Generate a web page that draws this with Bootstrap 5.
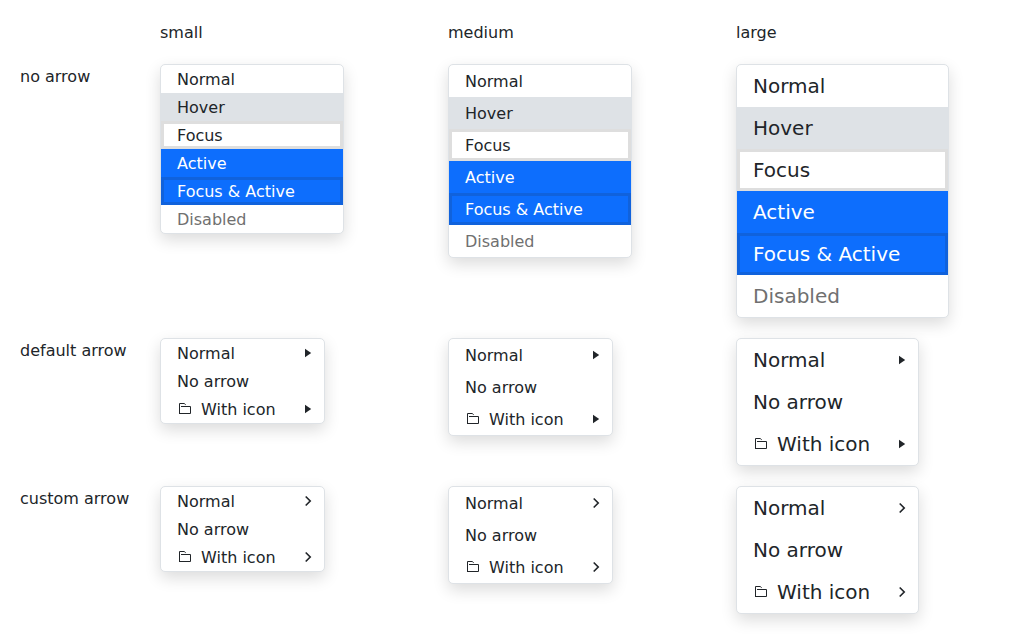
<!DOCTYPE html>
<html lang="en">
<head>
<meta charset="utf-8">
<meta name="viewport" content="width=device-width, initial-scale=1">
<title>Menu items</title>
<link href="https://cdn.jsdelivr.net/npm/bootstrap@5.3.0/dist/css/bootstrap.min.css" rel="stylesheet">
<style>
body { font-family: "DejaVu Sans", sans-serif; color: #212529; }
.demo-grid { grid-template-columns: 120px repeat(3, 1fr); gap: 20px; padding: 20px; }
.demo-label { padding-top: 1px; margin-bottom: -1px; }
.menu { border: 1px solid #dee2e6; border-radius: 5px; box-shadow: 0 6px 16px rgba(0, 0, 0, .14); }
.menu .dropdown-item { padding: 5px 48px 3px 16px; color: #212529; gap: 8px; }
.menu-sm .dropdown-item { padding-top: 3px; padding-bottom: 1px; }
.menu-lg .dropdown-item { padding-top: 6px; padding-bottom: 6px; font-size: 20px; }
.menu .is-hover { background: #dee2e6; }
.menu .is-focus { box-shadow: inset 0 0 0 3px rgba(34, 34, 34, .15); }
.menu .dropdown-item.active { color: #fff; background: #0d6efd; }
.menu .dropdown-item.disabled { color: #707070; }
.menu svg { width: 16px; height: 16px; flex: none; }
.menu-sm .lead-icon, .menu-md .lead-icon { margin-top: -2px; }
.menu .arrow { position: absolute; right: 8px; top: calc(50% - 8px); }
</style>
</head>
<body>
<svg class="d-none" aria-hidden="true">
  <symbol id="folder" viewBox="0 0 16 16"><path d="M2.5 13V2.5H7.2L8.7 3.7M4 5.5H13.5V12.5H2" fill="none" stroke="currentColor"/></symbol>
  <symbol id="triangle" viewBox="0 0 16 16"><path d="M5 3.8L11.2 8L5 12.2Z" fill="currentColor"/></symbol>
  <symbol id="chevron" viewBox="0 0 16 16"><path d="M5.7 3.5L10.2 8L5.7 12.5" fill="none" stroke="currentColor" stroke-width="1.65"/></symbol>
</svg>
<main class="d-grid demo-grid align-items-start" id="demo">
  <div></div><div class="demo-label">small</div><div class="demo-label">medium</div><div class="demo-label">large</div>
</main>
<script src="https://cdn.jsdelivr.net/npm/bootstrap@5.3.0/dist/js/bootstrap.bundle.min.js"></script>
<script>
const icon = (name, cls = '') => `<svg class="${cls}"><use href="#${name}"/></svg>`;
const item = (text, cls = '', arrow = '', lead = '') =>
  `<div class="dropdown-item position-relative d-flex align-items-center ${cls}">${lead ? icon(lead, 'lead-icon') : ''}<span>${text}</span>${arrow ? icon(arrow, 'arrow') : ''}</div>`;
const states = [['Normal'], ['Hover', 'is-hover'], ['Focus', 'is-focus'], ['Active', 'active'],
  ['Focus &amp; Active', 'active is-focus'], ['Disabled', 'disabled']];
const submenu = arrow => [['Normal', '', arrow], ['No arrow'], ['With icon', '', arrow, 'folder']];
const rows = [['no arrow', states], ['default arrow', submenu('triangle')], ['custom arrow', submenu('chevron')]];
document.getElementById('demo').insertAdjacentHTML('beforeend', rows.map(([label, items]) =>
  `<div class="demo-label">${label}</div>` + ['sm', 'md', 'lg'].map(size =>
    `<div class="d-flex"><div class="menu menu-${size} bg-white overflow-hidden">${items.map(i => item(...i)).join('')}</div></div>`
  ).join('')).join(''));
</script>
</body>
</html>
